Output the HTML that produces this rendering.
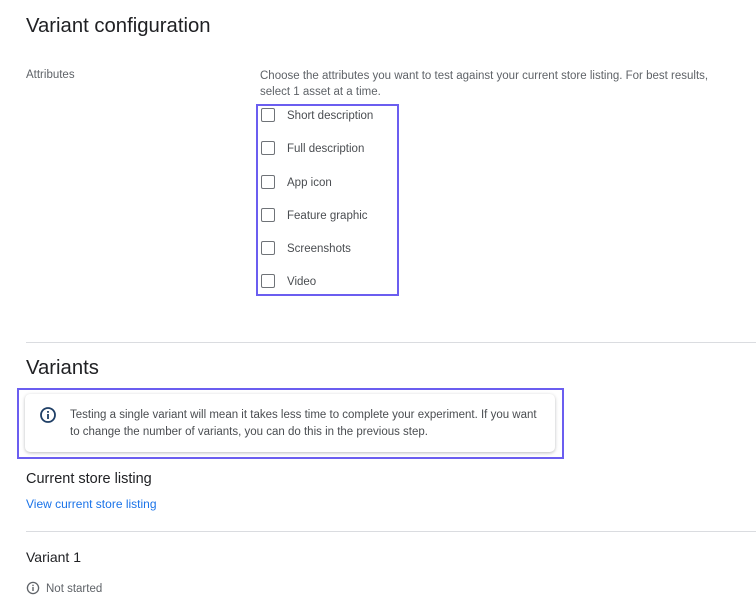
<!DOCTYPE html>
<html><head><meta charset="utf-8"><style>
*{margin:0;padding:0;box-sizing:border-box}
body{width:756px;height:606px;background:#fff;font-family:"Liberation Sans",Arial,sans-serif;color:#3c4043;position:relative;overflow:hidden}
.a{position:absolute;white-space:nowrap}
.h1{font-size:20.3px;color:#202124}
.s{font-size:11.5px;color:#5f6368}
.cb{position:absolute;left:261px;width:14px;height:14px;border:1.5px solid #6f7378;border-radius:2px}
.lb{position:absolute;left:287px;font-size:11.5px;color:#4a4d51}
.hr{position:absolute;left:26px;right:0;height:1px;background:#dadce0}
</style></head><body>
<div class="a h1" style="left:26px;top:15px">Variant configuration</div>
<div class="a s" style="left:26px;top:69px">Attributes</div>
<div class="a s" style="left:260px;top:68px;line-height:16px">Choose the attributes you want to test against your current store listing. For best results,<br>select 1 asset at a time.</div>
<div class="a" style="left:256px;top:104px;width:143px;height:192px;border:2px solid #6b5ef0"></div>
<div class="cb" style="top:108px"></div><div class="lb" style="top:110px">Short description</div>
<div class="cb" style="top:141px"></div><div class="lb" style="top:143px">Full description</div>
<div class="cb" style="top:175px"></div><div class="lb" style="top:177px">App icon</div>
<div class="cb" style="top:208px"></div><div class="lb" style="top:210px">Feature graphic</div>
<div class="cb" style="top:241px"></div><div class="lb" style="top:243px">Screenshots</div>
<div class="cb" style="top:274px"></div><div class="lb" style="top:276px">Video</div>
<div class="hr" style="top:342px"></div>
<div class="a h1" style="left:26px;top:357px">Variants</div>
<div class="a" style="left:17px;top:388px;width:547px;height:71px;border:2px solid #6b5ef0"></div>
<div class="a" style="left:25px;top:394px;width:530px;height:58px;border-radius:5px;box-shadow:0 1px 3px rgba(60,64,67,.35);background:#fff"></div>
<svg class="a" style="left:39px;top:406px" width="18" height="18" viewBox="0 0 18 18"><circle cx="9" cy="9" r="7" fill="none" stroke="#1f3f66" stroke-width="1.8"/><rect x="8.1" y="8" width="1.8" height="5" fill="#1f3f66"/><rect x="8.1" y="5" width="1.8" height="1.8" fill="#1f3f66"/></svg>
<div class="a s" style="left:70px;top:407px;line-height:17px;color:#4a4d51">Testing a single variant will mean it takes less time to complete your experiment. If you want<br>to change the number of variants, you can do this in the previous step.</div>
<div class="a" style="left:26px;top:471px;font-size:14.5px;color:#202124">Current store listing</div>
<div class="a" style="left:26px;top:497px;font-size:12px;color:#1a73e8">View current store listing</div>
<div class="hr" style="top:531px"></div>
<div class="a" style="left:26px;top:549px;font-size:14px;color:#202124">Variant 1</div>
<svg class="a" style="left:26px;top:581px" width="14" height="14" viewBox="0 0 14 14"><circle cx="7" cy="7" r="5.6" fill="none" stroke="#5f6368" stroke-width="1.3"/><rect x="6.3" y="6" width="1.4" height="4" fill="#5f6368"/><rect x="6.3" y="3.7" width="1.4" height="1.4" fill="#5f6368"/></svg>
<div class="a s" style="left:46px;top:583px">Not started</div>
</body></html>
